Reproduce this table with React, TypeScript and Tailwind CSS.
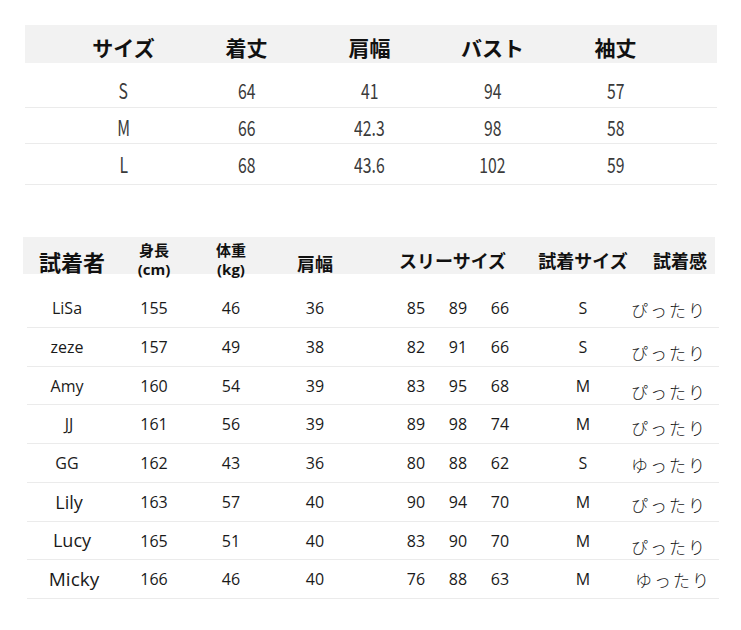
const sizeRows = [
  { size: "S", length: "64", shoulder: "41", bust: "94", sleeve: "57", row: "h-[45px] pt-[10px]" },
  { size: "M", length: "66", shoulder: "42.3", bust: "98", sleeve: "58", row: "h-[36px] pt-[3px]" },
  { size: "L", length: "68", shoulder: "43.6", bust: "102", sleeve: "59", row: "h-[41px]" },
]

const fitters = [
  { name: "LiSa", nameCls: "text-[16px]", h: "155", w: "46", s: "36", b: ["85", "89", "66"], size: "S", feel: "ぴったり", feelCls: "mt-[4px]", row: "h-[39px]" },
  { name: "zeze", nameCls: "text-[16px]", h: "157", w: "49", s: "38", b: ["82", "91", "66"], size: "S", feel: "ぴったり", feelCls: "mt-[12px]", row: "h-[39px]" },
  { name: "Amy", nameCls: "text-[16px]", h: "160", w: "54", s: "39", b: ["83", "95", "68"], size: "M", feel: "ぴったり", feelCls: "mt-[12px]", row: "h-[38px]" },
  { name: "JJ", nameCls: "text-[16px] ml-[4px]", h: "161", w: "56", s: "39", b: ["89", "98", "74"], size: "M", feel: "ぴったり", feelCls: "mt-[8px]", row: "h-[39px]" },
  { name: "GG", nameCls: "text-[16px]", h: "162", w: "43", s: "36", b: ["80", "88", "62"], size: "S", feel: "ゆったり", feelCls: "mt-[4px]", row: "h-[39px]" },
  { name: "Lily", nameCls: "text-[18px] ml-[4px]", h: "163", w: "57", s: "40", b: ["90", "94", "70"], size: "M", feel: "ぴったり", feelCls: "mt-[6px]", row: "h-[39px]" },
  { name: "Lucy", nameCls: "text-[18px] ml-[10px]", h: "165", w: "51", s: "40", b: ["83", "90", "70"], size: "M", feel: "ぴったり", feelCls: "mt-[12px]", row: "h-[38px]" },
  { name: "Micky", nameCls: "text-[19px] ml-[14px]", h: "166", w: "46", s: "40", b: ["76", "88", "63"], size: "M", feel: "ゆったり", feelCls: "mt-[2px] ml-[8px]", row: "h-[39px]" },
]

const cjk = "font-['Noto_Sans_CJK_JP',sans-serif]"
const latin = "font-['Open_Sans','Noto_Sans_CJK_JP',sans-serif]"

function Num({ v }: { v: string }) {
  return <span className="inline-block scale-x-[0.75] text-[21px] leading-none">{v}</span>
}

export default function App() {
  return (
    <div className={`w-[741px] h-[630px] bg-white overflow-hidden ${cjk}`}>
      {/* size chart */}
      <div className="ml-[25px] w-[692px] pt-[25px]">
        <div className="h-[38px] bg-[#f2f2f2] grid grid-cols-[repeat(5,123px)] pl-[37px] items-center text-[21px] font-bold text-[#111] leading-none">
          <div className="flex justify-center pt-[6px]">サイズ</div>
          <div className="flex justify-center pt-[6px]">着丈</div>
          <div className="flex justify-center pt-[6px]">肩幅</div>
          <div className="flex justify-center pt-[6px]">バスト</div>
          <div className="flex justify-center pt-[6px]">袖丈</div>
        </div>
        {sizeRows.map((r) => (
          <div key={r.size} className={`${r.row} border-b border-[#ebebeb] grid grid-cols-[repeat(5,123px)] pl-[37px] items-center text-[#3a3a3a]`}>
            <div className="flex justify-center"><Num v={r.size} /></div>
            <div className="flex justify-center"><Num v={r.length} /></div>
            <div className="flex justify-center"><Num v={r.shoulder} /></div>
            <div className="flex justify-center"><Num v={r.bust} /></div>
            <div className="flex justify-center"><Num v={r.sleeve} /></div>
          </div>
        ))}
      </div>

      {/* fitting report */}
      <div className="ml-[23px] mt-[52px] w-[692px] h-[37px] bg-[#f2f2f2]">
        <div className="ml-[4px] w-[692px] h-full grid grid-cols-[80px_94px_60px_108px_178px_72px_100px] items-center font-bold text-[#111] whitespace-nowrap">
          <div className="pl-[12px] pt-[6px] text-[22px] leading-none">試着者</div>
          <div className="flex flex-col items-center gap-[3px] text-[15px] leading-[17px] pt-[4px]">
            <span>身長</span>
            <span className={latin}>(cm)</span>
          </div>
          <div className="flex flex-col items-center gap-[3px] text-[15px] leading-[17px] pt-[4px]">
            <span>体重</span>
            <span className={latin}>(kg)</span>
          </div>
          <div className="flex justify-center pt-[11px] text-[18px] leading-none">肩幅</div>
          <div className="pl-[30px] pt-[4px] text-[18px] leading-none">スリーサイズ</div>
          <div className="flex justify-center pt-[4px] text-[18px] leading-none">試着サイズ</div>
          <div className="pl-[34px] pt-[4px] text-[18px] leading-none">試着感</div>
        </div>
      </div>

      <div className={`ml-[27px] mt-[15px] w-[692px] text-[16px] text-[#1a1a1a] ${latin}`}>
        {fitters.map((f) => (
          <div key={f.name} className={`${f.row} border-b border-[#ebebeb] grid grid-cols-[80px_94px_60px_108px_178px_72px_100px] items-center`}>
            <div className="flex justify-center">
              <span className={f.nameCls}>{f.name}</span>
            </div>
            <div className="flex justify-center">{f.h}</div>
            <div className="flex justify-center">{f.w}</div>
            <div className="flex justify-center">{f.s}</div>
            <div className="flex pl-[26px]">
              {f.b.map((n, i) => (
                <span key={i} className="w-[42px] text-center">{n}</span>
              ))}
            </div>
            <div className="flex justify-center">{f.size}</div>
            <div className="flex justify-center">
              <span className={`${f.feelCls} ${cjk} font-light text-[17px] tracking-[2px] text-[#1a1a1a]`}>{f.feel}</span>
            </div>
          </div>
        ))}
      </div>
    </div>
  )
}
